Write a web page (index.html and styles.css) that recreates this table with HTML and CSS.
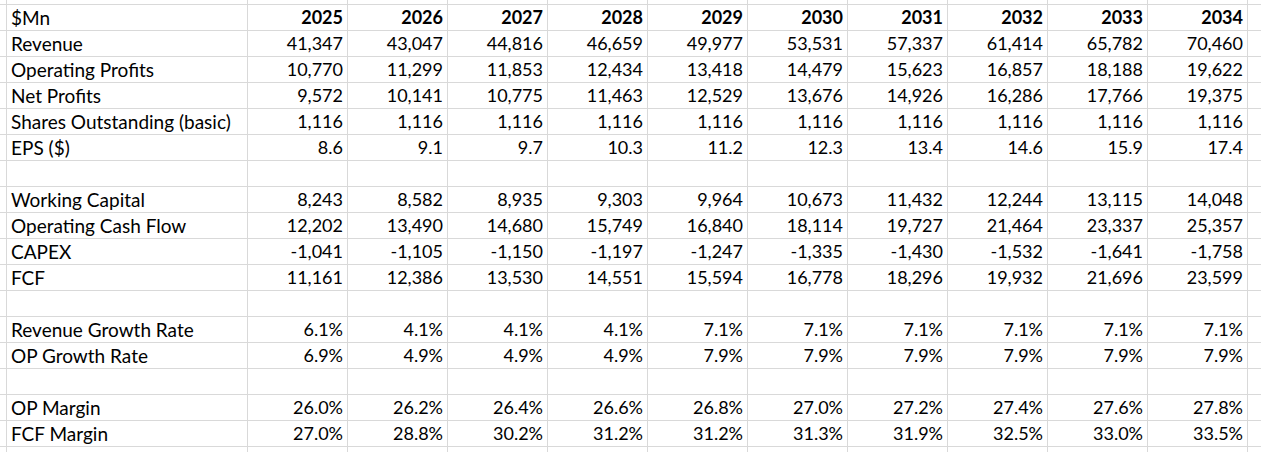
FILE: index.html
```html
<!DOCTYPE html>
<html>
<head>
<meta charset="utf-8">
<link rel="stylesheet" href="styles.css">
</head>
<body>
<div class="sheet">
  <div class="row edge-top"><span></span><span></span><span></span><span></span><span></span><span></span><span></span><span></span><span></span><span></span><span></span><span></span><span></span></div>
  <div class="row head"><span></span><span class="lbl">$Mn</span><span>2025</span><span>2026</span><span>2027</span><span>2028</span><span>2029</span><span>2030</span><span>2031</span><span>2032</span><span>2033</span><span>2034</span><span></span></div>
  <div class="row"><span></span><span class="lbl">Revenue</span><span>41,347</span><span>43,047</span><span>44,816</span><span>46,659</span><span>49,977</span><span>53,531</span><span>57,337</span><span>61,414</span><span>65,782</span><span>70,460</span><span></span></div>
  <div class="row"><span></span><span class="lbl">Operating Profits</span><span>10,770</span><span>11,299</span><span>11,853</span><span>12,434</span><span>13,418</span><span>14,479</span><span>15,623</span><span>16,857</span><span>18,188</span><span>19,622</span><span></span></div>
  <div class="row"><span></span><span class="lbl">Net Profits</span><span>9,572</span><span>10,141</span><span>10,775</span><span>11,463</span><span>12,529</span><span>13,676</span><span>14,926</span><span>16,286</span><span>17,766</span><span>19,375</span><span></span></div>
  <div class="row"><span></span><span class="lbl">Shares Outstanding (basic)</span><span>1,116</span><span>1,116</span><span>1,116</span><span>1,116</span><span>1,116</span><span>1,116</span><span>1,116</span><span>1,116</span><span>1,116</span><span>1,116</span><span></span></div>
  <div class="row"><span></span><span class="lbl">EPS ($)</span><span>8.6</span><span>9.1</span><span>9.7</span><span>10.3</span><span>11.2</span><span>12.3</span><span>13.4</span><span>14.6</span><span>15.9</span><span>17.4</span><span></span></div>
  <div class="row"><span></span><span></span><span></span><span></span><span></span><span></span><span></span><span></span><span></span><span></span><span></span><span></span><span></span></div>
  <div class="row"><span></span><span class="lbl">Working Capital</span><span>8,243</span><span>8,582</span><span>8,935</span><span>9,303</span><span>9,964</span><span>10,673</span><span>11,432</span><span>12,244</span><span>13,115</span><span>14,048</span><span></span></div>
  <div class="row"><span></span><span class="lbl">Operating Cash Flow</span><span>12,202</span><span>13,490</span><span>14,680</span><span>15,749</span><span>16,840</span><span>18,114</span><span>19,727</span><span>21,464</span><span>23,337</span><span>25,357</span><span></span></div>
  <div class="row"><span></span><span class="lbl">CAPEX</span><span>-1,041</span><span>-1,105</span><span>-1,150</span><span>-1,197</span><span>-1,247</span><span>-1,335</span><span>-1,430</span><span>-1,532</span><span>-1,641</span><span>-1,758</span><span></span></div>
  <div class="row"><span></span><span class="lbl">FCF</span><span>11,161</span><span>12,386</span><span>13,530</span><span>14,551</span><span>15,594</span><span>16,778</span><span>18,296</span><span>19,932</span><span>21,696</span><span>23,599</span><span></span></div>
  <div class="row"><span></span><span></span><span></span><span></span><span></span><span></span><span></span><span></span><span></span><span></span><span></span><span></span><span></span></div>
  <div class="row"><span></span><span class="lbl">Revenue Growth Rate</span><span>6.1%</span><span>4.1%</span><span>4.1%</span><span>4.1%</span><span>7.1%</span><span>7.1%</span><span>7.1%</span><span>7.1%</span><span>7.1%</span><span>7.1%</span><span></span></div>
  <div class="row"><span></span><span class="lbl">OP Growth Rate</span><span>6.9%</span><span>4.9%</span><span>4.9%</span><span>4.9%</span><span>7.9%</span><span>7.9%</span><span>7.9%</span><span>7.9%</span><span>7.9%</span><span>7.9%</span><span></span></div>
  <div class="row"><span></span><span></span><span></span><span></span><span></span><span></span><span></span><span></span><span></span><span></span><span></span><span></span><span></span></div>
  <div class="row"><span></span><span class="lbl">OP Margin</span><span>26.0%</span><span>26.2%</span><span>26.4%</span><span>26.6%</span><span>26.8%</span><span>27.0%</span><span>27.2%</span><span>27.4%</span><span>27.6%</span><span>27.8%</span><span></span></div>
  <div class="row"><span></span><span class="lbl">FCF Margin</span><span>27.0%</span><span>28.8%</span><span>30.2%</span><span>31.2%</span><span>31.2%</span><span>31.3%</span><span>31.9%</span><span>32.5%</span><span>33.0%</span><span>33.5%</span><span></span></div>
  <div class="row edge-bottom"><span></span><span></span><span></span><span></span><span></span><span></span><span></span><span></span><span></span><span></span><span></span><span></span><span></span></div>
</div>
</body>
</html>
```
FILE: styles.css
```css
html, body {
  margin: 0;
  padding: 0;
  background: #ffffff;
  overflow: hidden;
}

.sheet {
  display: flex;
  flex-direction: column;
  gap: 1px;
  background: #d9d9d9;
  width: 1261px;
  height: 452px;
  overflow: hidden;
  font-family: "Lato", "Liberation Sans", sans-serif;
  font-size: 18px;
  color: #000000;
}

.row {
  display: grid;
  grid-template-columns: 6px 240px repeat(10, 99px) 1fr;
  column-gap: 1px;
  background: #d9d9d9;
  height: 25px;
  flex: none;
}

.row > span {
  background: #ffffff;
  line-height: 25px;
  text-align: right;
  padding-right: 4px;
  white-space: nowrap;
  overflow: hidden;
}

.row > span.lbl {
  text-align: left;
  padding-left: 4px;
  padding-right: 0;
  font-size: 19px;
}

.head > span {
  font-weight: 700;
}

.head > span.lbl {
  font-weight: 400;
}

.edge-top {
  height: 4px;
}

.edge-bottom {
  flex: 1 1 auto;
  height: auto;
}
```
